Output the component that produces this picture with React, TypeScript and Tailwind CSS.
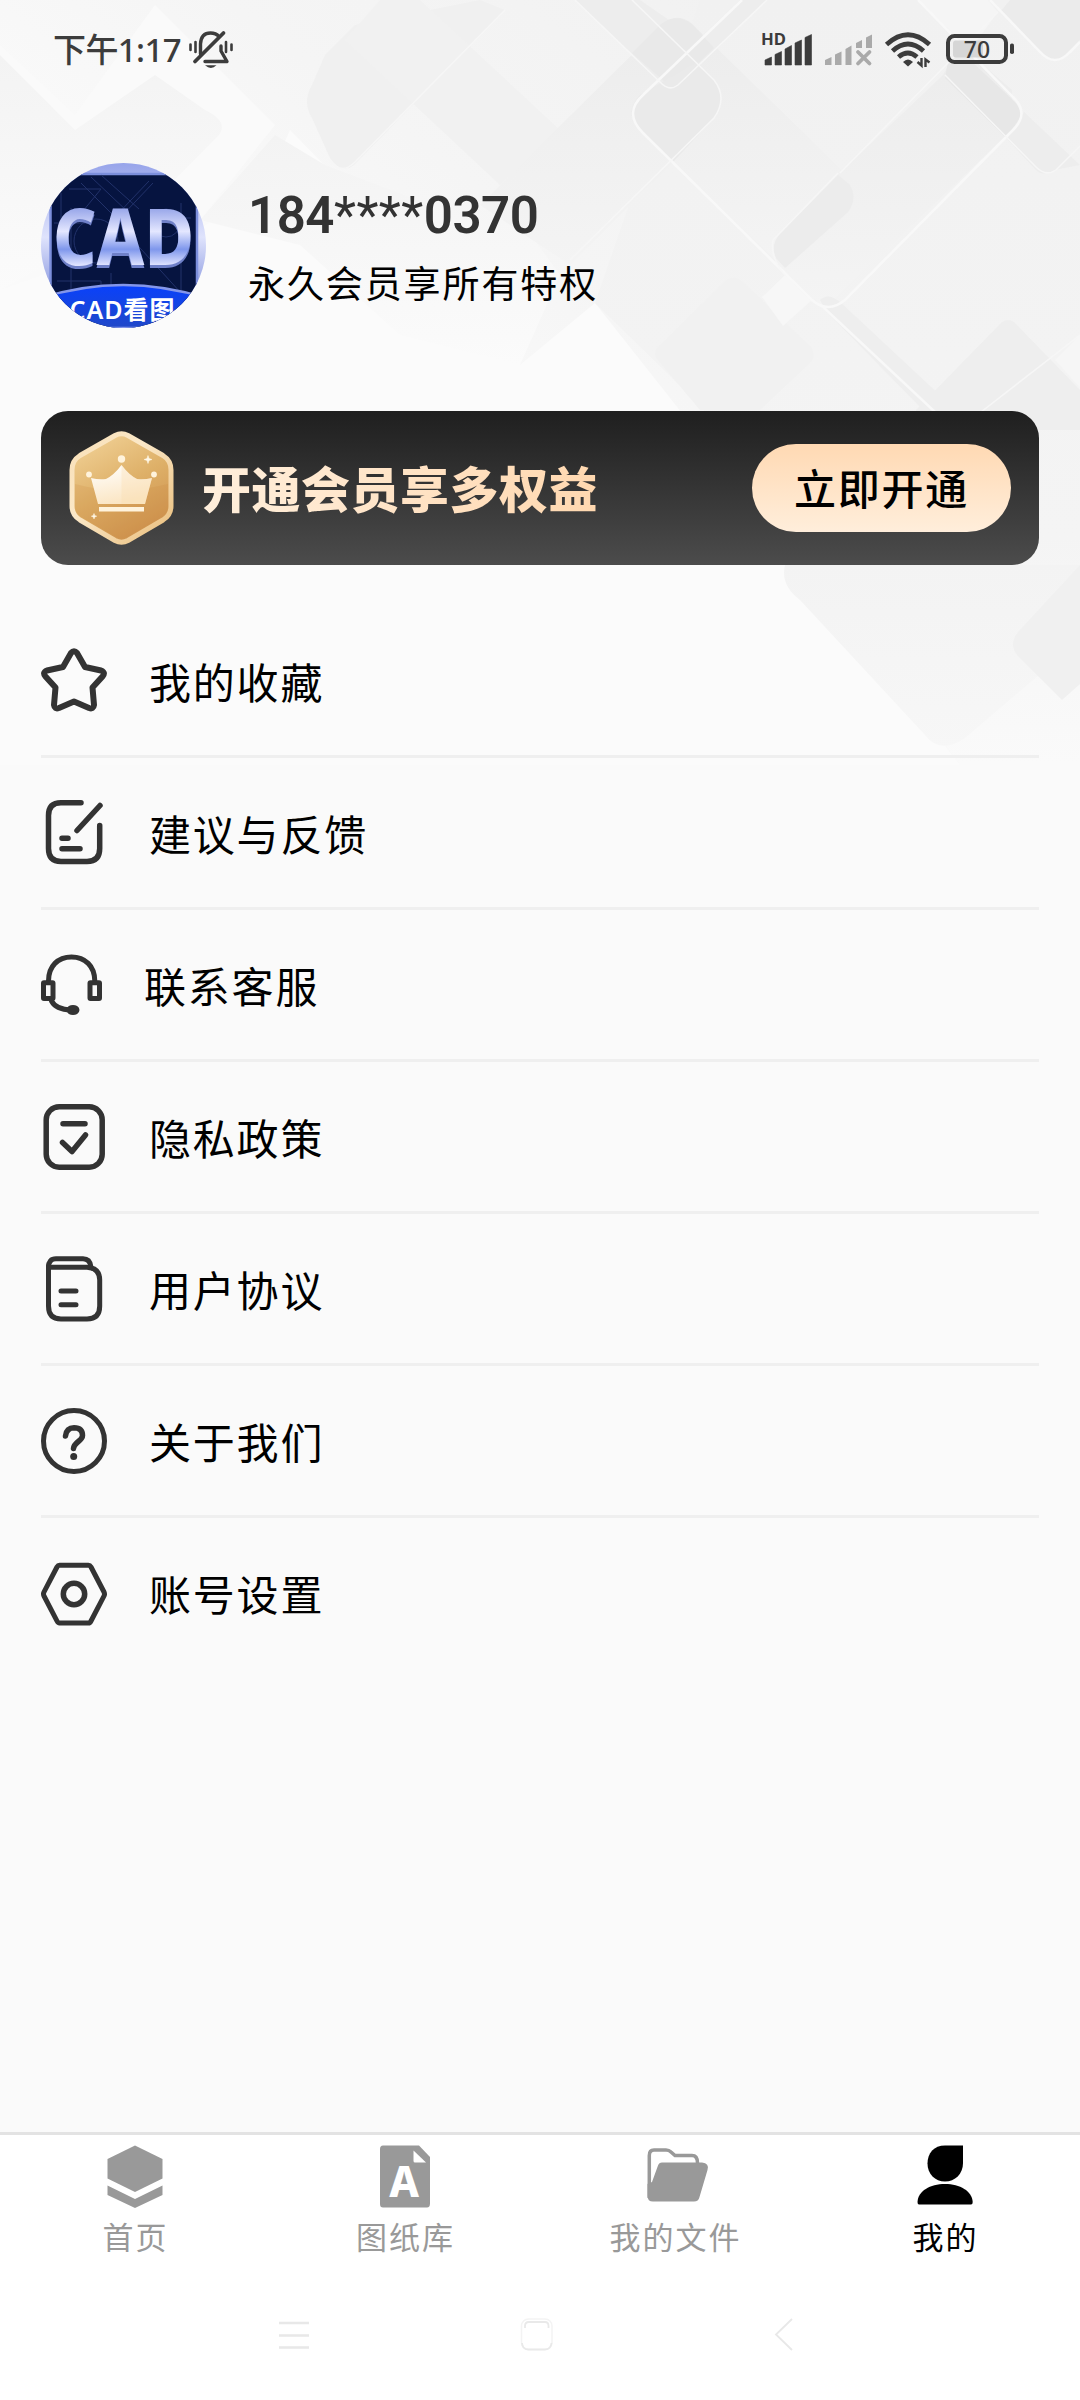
import React from 'react';

interface MenuItem {
  label: string;
  icon: React.ReactNode;
  iconWidth?: number;
}

interface TabItem {
  label: string;
  icon: React.ReactNode;
  active?: boolean;
}

const lineProps = {
  fill: 'none',
  stroke: '#333333',
  strokeWidth: 5.5,
  strokeLinecap: 'round' as const,
  strokeLinejoin: 'round' as const,
};

const menuItems: MenuItem[] = [
  {
    label: '我的收藏',
    icon: (
      <path
        {...lineProps}
        strokeWidth={6}
        d="M30 5Q33 1.500 36 5L44 19 60 22.500Q65 24.500 61.500 28.500L51.500 39.500 53 57Q52.500 61.500 48 60L33 53.500 18 60Q13.500 61.500 13 57L14.500 39.500 4.500 28.500Q1 24.500 6 22.500L22 19Z"
      />
    ),
  },
  {
    label: '建议与反馈',
    icon: (
      <g {...lineProps}>
        <path d="M40 2.800H20Q7.500 2.800 7.500 15.500V48.500Q7.500 61.500 20 61.500H46Q58.700 61.500 58.700 48.500V25.500" />
        <path d="M59 5.500 36 30.500M21 38.200H27M21 48.800H39" />
      </g>
    ),
  },
  {
    label: '联系客服',
    iconWidth: 61,
    icon: (
      <g {...lineProps} strokeWidth={5}>
        <path d="M7.500 27C7.500 12 17 3 30.500 3S53.800 12 53.800 27" />
        <rect x="2.500" y="28.800" width="9.500" height="15.800" rx="0.500" />
        <rect x="49" y="28.800" width="9.500" height="15.800" rx="0.500" />
        <path d="M10.500 47Q15 55.500 30 56" />
        <ellipse cx="32" cy="56" rx="4" ry="2.500" fill="#333333" />
      </g>
    ),
  },
  {
    label: '隐私政策',
    icon: (
      <g {...lineProps}>
        <rect x="5.200" y="2.800" width="56" height="60.400" rx="13" />
        <path d="M22 19.700H44M21.500 38.500 31 47.500 44.500 31" />
      </g>
    ),
  },
  {
    label: '用户协议',
    icon: (
      <g {...lineProps} strokeWidth={5}>
        <path d="M7.500 11Q7.500 2.800 15 2.800H42Q49 2.800 50 11" />
        <path d="M7.500 11.300H46Q58.700 12 58.700 24V50Q58.700 63 46 63H20Q7.500 63 7.500 50V10" />
        <path d="M20 35H35M20 48.700H35" />
      </g>
    ),
  },
  {
    label: '关于我们',
    icon: (
      <g {...lineProps}>
        <circle cx="33" cy="33" r="30.500" strokeWidth={5} />
        <path d="M24.500 28Q25.500 19.800 33 19.800 41.500 20 41.500 27.500C41.500 33 33 34 32.500 40.500" />
        <circle cx="32.700" cy="48.500" r="3.500" fill="#333333" stroke="none" />
      </g>
    ),
  },
  {
    label: '账号设置',
    icon: (
      <g {...lineProps} strokeWidth={5}>
        <path d="M18.500 5.200H47.500Q49 5.200 50 7L63 32Q64 34 63 36L50 61Q49 63 47.500 63H18.500Q17 63 16 61L3 36Q2 34 3 32L16 7Q17 5.200 18.500 5.200Z" />
        <circle cx="33" cy="34" r="10.700" strokeWidth={5.500} />
      </g>
    ),
  },
];

const tabs: TabItem[] = [
  {
    label: '首页',
    icon: (
      <g fill="#999999">
        <path d="M35 3.500 62.500 17V36.500L35 50 7.500 36.500V17Z" />
        <path d="M7.500 43.500 35 57 62.500 43.500V53L35 66 7.500 53Z" />
      </g>
    ),
  },
  {
    label: '图纸库',
    icon: (
      <>
        <path d="M13 3.500H49L60 15V61.500Q60 65.500 57 65.500H13Q10 65.500 10 62V7Q10 3.500 13 3.500Z" fill="#999999" />
        <path d="M43.500 8.500 56 20.500H45Q43.500 20.500 43.500 19Z" fill="#ffffff" />
        <text x="34" y="55" textAnchor="middle" fontSize="42" fontWeight="800" fill="#ffffff" fontFamily="Noto Sans, sans-serif">
          A
        </text>
      </>
    ),
  },
  {
    label: '我的文件',
    icon: (
      <>
        <path
          d="M9.300 56V13.500Q9.300 8 14 8H26Q29 8 31 10L35 13.500H52Q57.500 13.500 57.500 21"
          fill="none"
          stroke="#999999"
          strokeWidth="3.500"
        />
        <path d="M22 20.500H62Q69.500 21 67.500 28L59.500 55Q58.500 59.500 54 59.500H13Q7.500 59.500 7.500 54V42L12 40 18 23.500Q19 20.500 22 20.500Z" fill="#999999" />
      </>
    ),
  },
  {
    label: '我的',
    active: true,
    icon: (
      <g fill="#000000">
        <path d="M53 3.500H35C24 3.500 17.500 11 17.500 21.500S25 39.500 35 39.500 53 32 53 21Z" />
        <path d="M9 62.500Q7.500 62.500 7.500 60C8 49 20 42 35 42S62 49 62.700 60Q62.700 62.500 61 62.500Z" />
      </g>
    ),
  },
];

// Faint overlapping diamonds behind the header
function Backdrop() {
  return (
    <svg className="absolute top-0 left-0" width="1080" height="765" viewBox="0 0 1080 765">
      <defs>
        <linearGradient id="base" gradientUnits="userSpaceOnUse" x1="800" y1="0" x2="430" y2="500">
          <stop offset="0" stopColor="#f1f1f1" />
          <stop offset="0.550" stopColor="#f5f5f5" />
          <stop offset="1" stopColor="#fbfbfb" />
        </linearGradient>
        <linearGradient id="right" gradientUnits="userSpaceOnUse" x1="0" y1="0" x2="0" y2="765">
          <stop offset="0" stopColor="#f1f1f1" />
          <stop offset="0.700" stopColor="#f4f4f4" />
          <stop offset="1" stopColor="#fafafa" />
        </linearGradient>
        <linearGradient id="fadeDown" x1="0" y1="0" x2="0" y2="1">
          <stop offset="0" stopColor="#ececec" />
          <stop offset="1" stopColor="#f4f4f4" />
        </linearGradient>
        <linearGradient id="chevron" x1="0" y1="0" x2="0" y2="1">
          <stop offset="0" stopColor="#f3f3f3" />
          <stop offset="1" stopColor="#fbfbfb" />
        </linearGradient>
        <linearGradient id="lower" gradientUnits="userSpaceOnUse" x1="0" y1="565" x2="0" y2="755">
          <stop offset="0" stopColor="#f3f3f3" />
          <stop offset="1" stopColor="#f7f7f7" />
        </linearGradient>
      </defs>
      <rect width="1080" height="765" fill="#fbfbfb" />
      <path d="M0 0H1080V765H960L595 303 520 365 290 130Q240 260 0 280Z" fill="url(#base)" />
      <path d="M595 303 700 405 960 765H1080V0H700Z" fill="url(#right)" />
      <path d="M75 115 155 5 275 125 200 220 0 290V45Z" fill="#fafafa" />
      <path d="M0 55 75 130 155 75 205 110Q230 122 218 136L140 215 0 290Z" fill="url(#chevron)" />
      <path d="M325 165 470 220 520 220 560 275 520 365 400 335 300 245 200 220 275 135Z" fill="url(#chevron)" />
      <path d="M480 0 355 25Q340 40 325 55L312 85Q302 102 312 118L330 158Q342 175 354 165L505 10Z" fill="#f0f0f0" />
      <path d="M420 0 560 130 500 185 345 40 380 0Z" fill="#f1f1f1" />
      {/* wide band running down to the right */}
      <path d="M662 25Q675 12 690 22L850 178Q860 195 848 210L787 270 672 163 570 265 480 205Z" fill="url(#fadeDown)" />
      <path d="M943 75 840 173 773 245Q770 260 785 275L825 308 1012 130V90L960 45Z" fill="url(#fadeDown)" />
      <path d="M575 0 665 85Q672 92 680 85L767 0H740L698 40 640 0Z" fill="#ededed" />
      <path d="M632 53 660 25Q675 12 692 24L714 48 672 88Z" fill="#e9e9e9" />
      <path d="M672 163 638 128Q624 112 640 95L697 62 714 80Q728 98 714 118Z" fill="#eaeaea" />
      <path d="M838 175 850 185Q858 198 848 212L785 268 776 258Q770 245 780 234Z" fill="#ececec" />
      <path d="M970 60 1015 102Q1026 115 1014 130L1006 138 945 78 948 62Z" fill="#e7e7e7" />
      <path d="M918 0H988L998 12 970 50Z" fill="#f5f5f5" />
      <path d="M1010 0H1080V40L1066 54Q1055 64 1044 54L1000 12Z" fill="#ebebeb" />
      <path d="M1024 112 1080 165 1054 170Q1042 178 1034 168L1006 138Z" fill="#ededed" />
      <path d="M725 281Q733 274 742 281L812 348Q816 357 810 363L760 410H700L656 358Q653 350 660 345Z" fill="#f1f1f1" />
      <path d="M762 297 785 275 811 301 783 326Z" fill="#f7f7f7" />
      <path d="M820 300Q828 292 840 302L945 400 925 412 825 310Z" fill="#eeeeee" />
      <path d="M916 410 1000 324Q1008 316 1016 324L1080 390V430H916Z" fill="#eeeeee" />
      <path d="M1055 360 1080 335V388Z" fill="#f6f6f6" />
      <path d="M785 565Q780 585 800 600L925 735Q940 755 965 738L1080 640V565Z" fill="url(#lower)" />
      <path d="M1080 565 1018 632Q1008 645 1018 656L1062 700 1080 684Z" fill="#f0f0f0" />
      <g fill="none" stroke="#f8f8f8" strokeWidth="2.500">
        <path d="M742 0 643 95Q623 113 643 133L812 300Q828 314 845 300L1013 130Q1030 113 1013 97L918 0" />
        <path d="M822 306 935 412" />
        <path d="M990 0 1040 52Q1055 68 1070 52L1080 42" />
      </g>
      <g fill="none" stroke="#f6f6f6" strokeWidth="1.500">
        <path d="M632 0 714 80Q728 98 714 118L570 260M838 173 773 240Q770 258 785 275M840 173 998 12" />
        <path d="M575 0 660 82Q669 92 678 85L767 0M945 75 1036 167Q1046 177 1056 170L1080 146" />
        <path d="M310 140 330 162Q342 175 355 162L505 10M945 440 1080 335" />
      </g>
    </svg>
  );
}

function StatusBar() {
  return (
    <div className="flex h-[98px] items-start justify-between pr-[66px] pl-[53px]">
      <div className="flex items-start">
        <span className="mt-[29px] flex h-[40px] w-[129px] items-center whitespace-nowrap font-['Noto_Sans','Noto_Sans_CJK_SC',sans-serif] text-[33px] leading-none font-medium tracking-[-0.600px] text-[#3c3c3c]">
          下午1:17
        </span>
        <svg className="mt-[29px] ml-[5px]" width="48" height="42" viewBox="187 29 48 42" fill="none" stroke="#3c3c3c" strokeWidth="3.400" strokeLinecap="round">
          <path d="M200.500 54V44Q201 33 210.500 33 216 33 219 36.500M221 46V51L227 61.500H205" strokeLinejoin="round" />
          <path d="M223.500 33 195 61.500" strokeWidth="3.800" />
          <path d="M190.500 44.500V50M195.500 42V52M226 42V52M231.500 44.500V50" strokeWidth="2.600" />
          <path d="M205 65.300H216.500Q211 70.500 205 65.300Z" fill="#3c3c3c" stroke="none" />
        </svg>
      </div>
      <svg className="mt-[28px]" width="254" height="42" viewBox="760 28 254 42">
        <text x="761" y="45" fontSize="16.500" fontWeight="700" textLength="25" lengthAdjust="spacingAndGlyphs" fill="#3c3c3c" fontFamily="Noto Sans, sans-serif">
          HD
        </text>
        <path
          d="M765 65V60L771.500 57V65ZM775 65V54.500L781.500 51.500V65ZM785 65V49L791.500 45.500V65ZM795 65V43L801.500 40V65ZM805 65V37.500L811.500 34.500V65Z"
          fill="#3c3c3c"
          stroke="#3c3c3c"
          strokeWidth="0.600"
        />
        <path d="M825 65V60L831.500 57V65ZM835 65V54.500L841.500 51.500V65ZM845.500 65V49L851.500 45.500V65ZM856 48V43L862 40V48ZM866 48V37.500L872 34.500V48Z" fill="#aaaaaa" />
        <path d="M858 52 869.500 63.500M869.500 52 858 63.500" stroke="#aaaaaa" strokeWidth="3.800" strokeLinecap="round" />
        <g fill="none" stroke="#3c3c3c" strokeWidth="4.800">
          <path d="M886.500 44.500Q908 25 929.500 44.500" />
          <path d="M892.500 51Q908 37 923.500 51" />
          <path d="M898.500 57Q908 49 917 57" />
        </g>
        <path d="M903 62Q908 57 913 62L908 66.500Z" fill="#3c3c3c" />
        <path d="M921.500 58V65.500L917.500 62M925.500 67V59.500L929.500 62.500" fill="none" stroke="#3c3c3c" strokeWidth="2.400" />
        <rect x="953" y="40.500" width="30" height="17" rx="3" fill="#d6d6d6" />
        <rect x="948" y="36" width="58" height="26" rx="6.500" fill="none" stroke="#3c3c3c" strokeWidth="4" />
        <rect x="1010" y="43.500" width="4" height="10.500" rx="1.800" fill="#3c3c3c" />
        <text x="977" y="57.500" fontSize="23" fontWeight="500" textAnchor="middle" fill="#3c3c3c" fontFamily="Noto Sans, sans-serif">
          70
        </text>
      </svg>
    </div>
  );
}

function Avatar() {
  return (
    <svg className="shrink-0 overflow-visible" width="165" height="165" viewBox="0 0 165 165">
      <defs>
        <clipPath id="avatarClip">
          <circle cx="82.500" cy="82.500" r="82.500" />
        </clipPath>
        <linearGradient id="frame" x1="0" y1="0" x2="0" y2="1">
          <stop offset="0" stopColor="#97a4ea" />
          <stop offset="0.450" stopColor="#dfe3fc" />
          <stop offset="0.800" stopColor="#8493de" />
        </linearGradient>
        <linearGradient id="letters" gradientUnits="userSpaceOnUse" x1="0" y1="46" x2="0" y2="102">
          <stop offset="0" stopColor="#9aa8ea" />
          <stop offset="0.400" stopColor="#e4e7ff" />
          <stop offset="0.720" stopColor="#7f97ec" />
          <stop offset="1" stopColor="#dfe3ff" />
        </linearGradient>
        <linearGradient id="ribbon" x1="0" y1="0" x2="0" y2="1">
          <stop offset="0" stopColor="#0a41fb" />
          <stop offset="1" stopColor="#2048c8" />
        </linearGradient>
      </defs>
      <g clipPath="url(#avatarClip)">
        <rect width="165" height="165" fill="url(#frame)" />
        <rect x="9.500" y="11" width="146.500" height="156" rx="2" fill="#061440" stroke="#7c8fdc" strokeWidth="2.500" />
        <g fill="none" stroke="#22326a" strokeWidth="1">
          <path d="M40 20 75 55M50 14 88 50M60 12 98 46M28 26H60L42 48M112 20 76 58M108 18 72 56M13 60H50M110 55H150M20 30V75M16 118H60V150M70 110V135H120M90 75 140 130M30 45V130M140 40V130" />
          <circle cx="55" cy="78" r="22" />
          <circle cx="125" cy="60" r="14" />
        </g>
        <path d="M0 135Q82 109 165 135V165H0Z" fill="url(#ribbon)" stroke="#8496ea" strokeWidth="2.500" />
        <text
          x="81"
          y="155.500"
          textAnchor="middle"
          textLength="105"
          fontSize="25"
          fontWeight="600"
          fill="#ffffff"
          fontFamily="Noto Sans, Noto Sans CJK SC, sans-serif"
        >
          CAD看图
        </text>
      </g>
      <g fontFamily="Noto Sans, sans-serif" fontWeight="800" fontSize="78">
        <text x="12" y="105" textLength="141" lengthAdjust="spacingAndGlyphs" fill="#6f80c8">
          CAD
        </text>
        <text x="12" y="102" textLength="141" lengthAdjust="spacingAndGlyphs" fill="url(#letters)">
          CAD
        </text>
      </g>
    </svg>
  );
}

function CrownBadge() {
  return (
    <svg className="shrink-0" width="105" height="114" viewBox="0 0 105 114">
      <defs>
        <linearGradient id="gold" x1="0.200" y1="0" x2="0.700" y2="1">
          <stop offset="0" stopColor="#f1d196" />
          <stop offset="0.500" stopColor="#deb068" />
          <stop offset="1" stopColor="#cd904c" />
        </linearGradient>
        <linearGradient id="rim" x1="0" y1="0" x2="1" y2="1">
          <stop offset="0" stopColor="#f8dfb6" />
          <stop offset="0.400" stopColor="#fbe8c8" />
          <stop offset="1" stopColor="#e9bd7a" />
        </linearGradient>
        <linearGradient id="crown" x1="0" y1="0" x2="0.300" y2="1">
          <stop offset="0" stopColor="#ffffff" />
          <stop offset="1" stopColor="#fbe6c4" />
        </linearGradient>
      </defs>
      <path
        d="M46 4.500Q52.500 1 59 4.500L94 24.500Q102 29.500 102 39V75Q102 84 94 89L59 109.500Q52.500 113 46 109.500L11 89Q3 84 3 75V39Q3 29.500 11 24.500Z"
        fill="url(#gold)"
        stroke="url(#rim)"
        strokeWidth="5"
      />
      <path d="M6 53Q50 65 99 53V75Q99 82 93 86L58 106Q52 109 47 106L12 86Q6 82 6 75Z" fill="#c9843e" fillOpacity="0.180" />
      <path d="M22 47Q30 49 37 48 45 44 52.500 34 60 44 68 48 75 49 83 47L76 73H29Z" fill="url(#crown)" />
      <path d="M52.500 34Q60 44 68 48 75 49 83 47L76 73H52.500Z" fill="#f9deb0" fillOpacity="0.350" />
      <rect x="30" y="76" width="45" height="4.500" fill="#fff3dc" />
      <circle cx="52.500" cy="28" r="3.700" fill="#fff3dc" />
      <circle cx="20" cy="43.500" r="2.900" fill="#fff3dc" />
      <circle cx="85" cy="43.500" r="2.900" fill="#fff3dc" />
      <path d="M79 24.500 80 27.500 83 28.500 80 29.500 79 32.500 78 29.500 75 28.500 78 27.500ZM25 82.500 25.700 84.500 27.700 85.200 25.700 86 25 88 24.300 86 22.300 85.200 24.300 84.500Z" fill="#fff8e8" stroke="#fff8e8" strokeWidth="0.500" />
    </svg>
  );
}

function MenuRow({ item, last }: { item: MenuItem; last: boolean }) {
  const width = item.iconWidth ?? 66;
  return (
    <div className={last ? 'flex h-[149px] items-center' : 'flex h-[152px] items-center border-b-[3px] border-[#efefef]'}>
      <svg className="shrink-0" width={width} height={width} viewBox={`0 0 ${width} ${width}`}>
        {item.icon}
      </svg>
      <span className="ml-[42px] text-[42px] leading-[60px] tracking-[1.800px] text-black">{item.label}</span>
    </div>
  );
}

function TabBar() {
  return (
    <div className="grid h-[140px] grid-cols-4 border-t-[3px] border-[#e3e3e3] bg-white">
      {tabs.map((tab) => (
        <div key={tab.label} className="flex flex-col items-center pt-[7px]">
          <svg width="70" height="70" viewBox="0 0 70 70">
            {tab.icon}
          </svg>
          <span
            className={
              tab.active
                ? 'mt-[2px] pl-[1px] text-[31px] leading-[44px] tracking-[2px] text-black'
                : 'mt-[2px] pl-[1px] text-[31px] leading-[44px] tracking-[2px] text-[#999999]'
            }
          >
            {tab.label}
          </span>
        </div>
      ))}
    </div>
  );
}

function NavigationBar() {
  return (
    <div className="flex h-[128px] items-start bg-white pt-[43px] pl-[277px]">
      <svg width="34" height="36" viewBox="0 0 34 36" stroke="#e8e8e8" strokeWidth="2.500">
        <path d="M2 8H32M2 20.500H32M2 32.500H32" />
      </svg>
      <svg className="ml-[208px]" width="36" height="38" viewBox="0 0 36 38" fill="none">
        <rect x="2.500" y="4" width="30.500" height="30.500" rx="7" stroke="#f3f3f3" strokeWidth="1.500" />
        <path d="M3 28Q3.500 34.500 9 34.500H26Q32 34.500 32.500 28M6 13V11Q6 7 10 7H26Q29.500 7 29.500 11V13" stroke="#e9e9e9" strokeWidth="1.800" />
      </svg>
      <svg className="ml-[215px]" width="28" height="38" viewBox="0 0 28 38" fill="none" stroke="#e8e8e8" strokeWidth="1.800">
        <path d="M22 4 6 19.500 22 35" />
      </svg>
    </div>
  );
}

export default function App() {
  return (
    <div className="relative h-[2400px] w-[1080px] overflow-hidden bg-[#fafafa] font-['Noto_Sans_CJK_SC',sans-serif]">
      <Backdrop />
      <div className="relative flex h-full flex-col">
        <StatusBar />

        <div className="mt-[65px] flex h-[165px] px-[41px]">
          <Avatar />
          <div className="ml-[42px] flex flex-col">
            <span className="mt-[23px] font-['Roboto',sans-serif] text-[51px] leading-[60px] font-semibold tracking-[-0.500px] text-[#333333]">
              184<span className="font-normal tracking-[0.500px]">****</span>0370
            </span>
            <span className="mt-[8px] text-[37px] leading-[56px] tracking-[1.900px] text-black">永久会员享所有特权</span>
          </div>
        </div>

        <div className="mx-[41px] mt-[83px] flex h-[154px] shrink-0 items-center rounded-[27px] bg-linear-to-b from-[#1f1f1f] to-[#4c4c4c] pr-[28px] pl-[28px]">
          <CrownBadge />
          <span className="mb-[2px] ml-[28px] bg-linear-to-r from-[#ffefdc] to-[#ffd8b0] bg-clip-text text-[49px] leading-[70px] font-black tracking-[0.500px] text-transparent">
            开通会员享多权益
          </span>
          <button className="ml-auto h-[88px] w-[259px] rounded-full bg-linear-to-b from-[#ffd9b3] to-[#ffeedb] pb-[2px] text-[42px] leading-[60px] font-medium tracking-[1.800px] text-black">
            立即开通
          </button>
        </div>

        <div className="mt-[41px] flex flex-1 flex-col px-[41px]">
          {menuItems.map((item, index) => (
            <MenuRow key={item.label} item={item} last={index === menuItems.length - 1} />
          ))}
        </div>

        <TabBar />
        <NavigationBar />
      </div>
    </div>
  );
}
